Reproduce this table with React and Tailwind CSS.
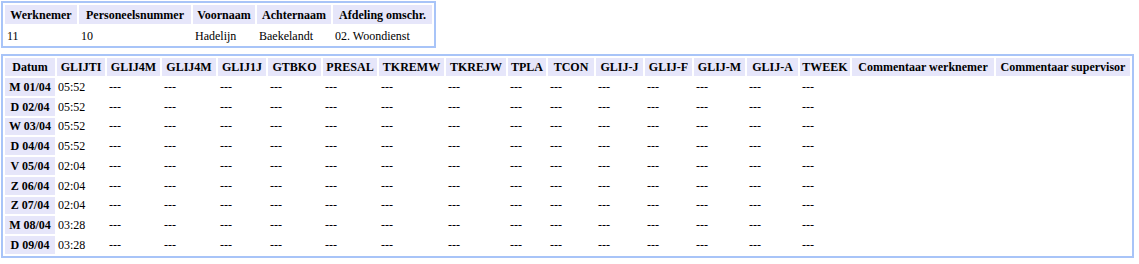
import React from 'react';

// column header widths measured from the sheet
const cols = [
  ['GLIJTI', 'w-[48px]'],
  ['GLIJ4M', 'w-[53px]'],
  ['GLIJ4M', 'w-[54px]'],
  ['GLIJ1J', 'w-[48px]'],
  ['GTBKO', 'w-[53px]'],
  ['PRESAL', 'w-[54px]'],
  ['TKREMW', 'w-[65px]'],
  ['TKREJW', 'w-[60px]'],
  ['TPLA', 'w-[38px]'],
  ['TCON', 'w-[46px]'],
  ['GLIJ-J', 'w-[47px]'],
  ['GLIJ-F', 'w-[47px]'],
  ['GLIJ-M', 'w-[51px]'],
  ['GLIJ-A', 'w-[51px]'],
  ['TWEEK', 'w-[50px]'],
];

const rows = [
  { day: 'M 01/04', t: '05:52' },
  { day: 'D 02/04', t: '05:52' },
  { day: 'W 03/04', t: '05:52' },
  { day: 'D 04/04', t: '05:52' },
  { day: 'V 05/04', t: '02:04' },
  { day: 'Z 06/04', t: '02:04' },
  { day: 'Z 07/04', t: '02:04' },
  { day: 'M 08/04', t: '03:28' },
  { day: 'D 09/04', t: '03:28' },
];

const th = 'bg-[#e6e6fa] px-0 font-bold text-center whitespace-nowrap';
const td = 'pl-[2px] pr-0 text-left whitespace-nowrap';

export default function App() {
  return (
    <div className="pt-px pl-px text-[12px] leading-[14px] text-black bg-white min-h-[264px]" style={{ fontFamily: '"Liberation Serif", "Times New Roman", serif' }}>
      {/* employee info */}
      <div className="inline-block border-2 border-[#a8c4f8]">
        <table className="border-separate border-spacing-[2px]">
          <thead>
            <tr className="h-[19px]">
              <th className={`${th} w-[72px] pt-px`}>Werknemer</th>
              <th className={`${th} w-[112px] pt-px`}>Personeelsnummer</th>
              <th className={`${th} w-[62px] pt-px`}>Voornaam</th>
              <th className={`${th} w-[74px] pt-px`}>Achternaam</th>
              <th className={`${th} w-[99px] pt-px`}>Afdeling omschr.</th>
            </tr>
          </thead>
          <tbody>
            <tr className="h-[18px]">
              <td className={`${td} pt-[2px]`}>11</td>
              <td className={`${td} pt-[2px]`}>10</td>
              <td className={`${td} pt-[2px]`}>Hadelijn</td>
              <td className={`${td} pt-[2px]`}>Baekelandt</td>
              <td className={`${td} pt-[2px]`}>02. Woondienst</td>
            </tr>
          </tbody>
        </table>
      </div>

      {/* time sheet */}
      <div className="mt-[3px] inline-block border-2 border-[#a8c4f8]">
        <table className="border-separate border-spacing-[2px]">
          <thead>
            <tr className="h-[18px]">
              <th className={`${th} w-[50px]`}>Datum</th>
              {cols.map(([c, w], i) => (
                <th key={i} className={`${th} ${w}`}>{c}</th>
              ))}
              <th className={`${th} w-[142px]`}>Commentaar werknemer</th>
              <th className={`${th} w-[134px]`}>Commentaar supervisor</th>
            </tr>
          </thead>
          <tbody>
            {rows.map((r) => (
              <tr key={r.day} className="h-[17.75px]">
                <th className={th}>{r.day}</th>
                <td className="pl-px text-left whitespace-nowrap">{r.t}</td>
                {cols.slice(1).map((c, i) => (
                  <td key={i} className={td}>---</td>
                ))}
                <td className={td}></td>
                <td className={td}></td>
              </tr>
            ))}
          </tbody>
        </table>
      </div>
    </div>
  );
}
